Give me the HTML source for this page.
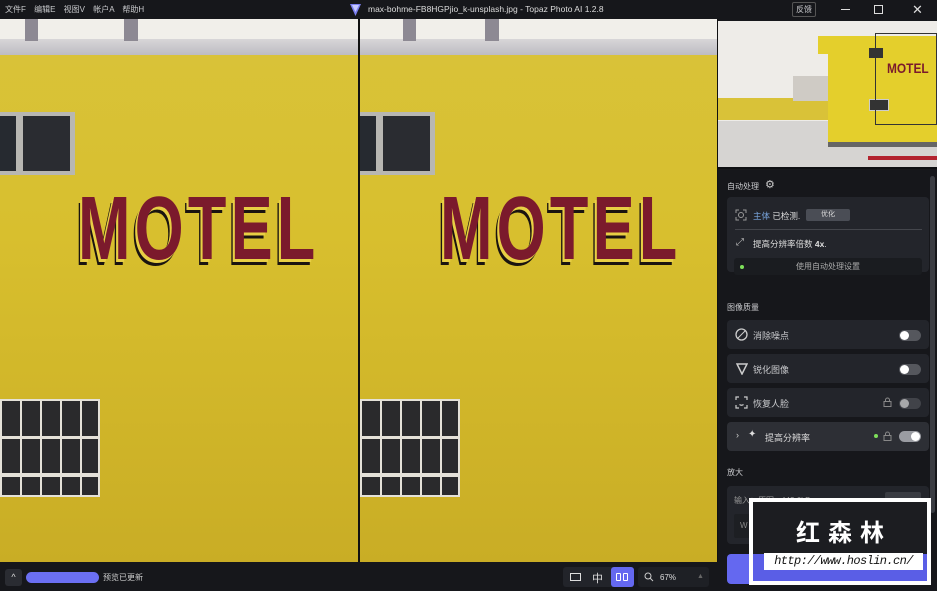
<!DOCTYPE html>
<html><head><meta charset="utf-8"><style>
*{margin:0;padding:0;box-sizing:border-box}
body{width:937px;height:591px;overflow:hidden;background:#16171b;font-family:"Liberation Sans","Noto Sans CJK SC",sans-serif;color:#c9cacd;position:relative;font-size:9px}
.a{position:absolute}
.top{left:0;top:0;width:937px;height:19px;background:#16171b}
.pan{top:19px;height:543px;overflow:hidden;background:linear-gradient(180deg,#d9c33a 0%,#d8bf2e 40%,#c9ad25 100%)}
.motel{font-family:"Liberation Sans Narrow","Liberation Sans",sans-serif;font-weight:bold;font-size:90px;letter-spacing:6px;color:#7b1a2c;transform:scaleX(0.70);transform-origin:left top;text-shadow:-3px 3px 0 #e8cf44,-5px 6px 0 #1a1410;line-height:1}
.card{background:#23252b;border-radius:4px;left:727px;width:202px}
.tog{width:22px;height:11px;border-radius:6px;background:#55575d}
.tog::after{content:"";position:absolute;width:9px;height:9px;border-radius:50%;background:#fff;top:1px;left:1px}
.tog.on{background:#9a9ca2}.tog.on::after{left:12px}
.gr{border:2px solid #e4e1d8;background:repeating-linear-gradient(90deg,#2a2a2c 0 18px,#e4e1d8 18px 20px)}
</style></head><body>
<div class="a top"></div>
<div class="a" style="left:5px;top:4px;font-size:8px;color:#c8c9cc;word-spacing:6px">文件F 编辑E 视图V 帐户A 帮助H</div>
<svg class="a" style="left:349px;top:2px" width="13" height="15"><path d="M1 2h11l-5.5 12z" fill="#7b7ff0"/><path d="M3 3h7l-3.5 7z" fill="#c5c8ff"/></svg>
<div class="a" style="left:368px;top:4px;font-size:8.5px;color:#ddd">max-bohme-FB8HGPjio_k-unsplash.jpg - Topaz Photo AI 1.2.8</div>
<div class="a" style="left:792px;top:2px;width:24px;height:15px;border:1px solid #555;border-radius:2px;font-size:8px;text-align:center;line-height:13px">反馈</div>
<div class="a" style="left:841px;top:9px;width:9px;height:1px;background:#ddd"></div>
<div class="a" style="left:874px;top:5px;width:9px;height:9px;border:1.3px solid #ddd"></div>
<div class="a" style="left:912px;top:2px;font-size:13px;color:#ddd">✕</div>

<div class="a pan" style="left:0;width:358px">
 <div class="a" style="left:0;top:0;width:358px;height:22px;background:#f1efea"></div>
 <div class="a" style="left:0;top:20px;width:358px;height:16px;background:linear-gradient(#d8d6d8,#bdbcc2)"></div>
 <div class="a" style="left:25px;top:0;width:13px;height:22px;background:#8d8993"></div>
 <div class="a" style="left:124px;top:0;width:14px;height:22px;background:#8d8993"></div>
 <div class="a" style="left:0;top:93px;width:75px;height:63px;background:#b8b7b2"></div>
 <div class="a" style="left:0;top:97px;width:16px;height:55px;background:#262a30"></div>
 <div class="a" style="left:23px;top:97px;width:47px;height:55px;background:#2a2c31"></div>
 <div class="a motel" style="left:78px;top:165px">MOTEL</div>
 <div class="a gr" style="left:0;top:380px;width:100px;height:98px"></div>
 <div class="a" style="left:0;top:417px;width:100px;height:3px;background:#e4e1d8"></div>
 <div class="a" style="left:0;top:454px;width:100px;height:4px;background:#e4e1d8"></div>
</div>
<div class="a" style="left:358px;top:19px;width:2px;height:543px;background:#111"></div>
<div class="a pan" style="left:360px;width:357px">
 <div class="a" style="left:0;top:0;width:357px;height:22px;background:#f1efea"></div>
 <div class="a" style="left:0;top:20px;width:357px;height:16px;background:linear-gradient(#d8d6d8,#bdbcc2)"></div>
 <div class="a" style="left:43px;top:0;width:13px;height:22px;background:#8d8993"></div>
 <div class="a" style="left:125px;top:0;width:14px;height:22px;background:#8d8993"></div>
 <div class="a" style="left:0;top:93px;width:75px;height:63px;background:#b8b7b2"></div>
 <div class="a" style="left:0;top:97px;width:16px;height:55px;background:#262a30"></div>
 <div class="a" style="left:23px;top:97px;width:47px;height:55px;background:#2a2c31"></div>
 <div class="a motel" style="left:80px;top:165px">MOTEL</div>
 <div class="a gr" style="left:0;top:380px;width:100px;height:98px"></div>
 <div class="a" style="left:0;top:417px;width:100px;height:3px;background:#e4e1d8"></div>
 <div class="a" style="left:0;top:454px;width:100px;height:4px;background:#e4e1d8"></div>
</div>
<div class="a" style="left:717px;top:19px;width:1px;height:543px;background:#111"></div>

<div class="a" style="left:718px;top:21px;width:219px;height:146px;overflow:hidden;background:#eeece8">
 <div class="a" style="left:0;top:100px;width:219px;height:46px;background:#d6d4d2"></div>
 <div class="a" style="left:0;top:77px;width:110px;height:22px;background:#d9c238"></div>
 <div class="a" style="left:75px;top:55px;width:35px;height:25px;background:#cfcbc5"></div>
 <div class="a" style="left:110px;top:15px;width:109px;height:106px;background:#e4cf2c"></div>
 <div class="a" style="left:100px;top:15px;width:12px;height:18px;background:#e4cf2c"></div>
 <div class="a" style="left:110px;top:121px;width:109px;height:5px;background:#666"></div>
 <div class="a" style="left:150px;top:135px;width:69px;height:4px;background:#b3232f"></div>
 <div class="a" style="left:169px;top:39px;font:bold 14px 'Liberation Sans';color:#7b1a2c;transform:scaleX(.85);transform-origin:left">MOTEL</div>
 <div class="a" style="left:151px;top:27px;width:14px;height:10px;background:#333"></div>
 <div class="a" style="left:151px;top:78px;width:20px;height:12px;background:#333;border:1px solid #ccc"></div>
 <div class="a" style="left:157px;top:12px;width:62px;height:92px;border:1px solid #333"></div>
</div>
<div class="a" style="left:718px;top:167px;width:219px;height:2px;background:#0e0f12"></div>
<div class="a" style="left:930px;top:176px;width:5px;height:337px;background:#3a3c42;border-radius:3px"></div>

<div class="a" style="left:727px;top:181px;font-size:8px">自动处理</div>
<div class="a" style="left:765px;top:178px;font-size:11px;color:#ccc">⚙</div>
<div class="a card" style="top:197px;height:75px"></div>
<svg class="a" style="left:735px;top:209px" width="12" height="12" fill="none" stroke="#999" stroke-width="1"><path d="M1 4V1h3M8 1h3v3M11 8v3H8M4 11H1V8"/><circle cx="6" cy="6" r="2.5"/></svg>
<div class="a" style="left:753px;top:210px;font-size:8.5px"><span style="color:#7aa7e0">主体</span> <span style="color:#ddd">已检测.</span></div>
<div class="a" style="left:806px;top:209px;width:44px;height:12px;background:#4a4d55;border-radius:2px;font-size:7px;text-align:center;line-height:12px;color:#ddd">优化</div>
<div class="a" style="left:735px;top:229px;width:187px;height:1px;background:#44464c"></div>
<div class="a" style="left:736px;top:237px;font-size:10px;color:#bbb">⤢</div>
<div class="a" style="left:753px;top:238px;font-size:8.5px;color:#ddd">提高分辨率倍数 <b>4x</b>.</div>
<div class="a" style="left:734px;top:258px;width:188px;height:17px;background:#1a1c20;border-radius:3px;font-size:8px;text-align:center;line-height:17px;color:#aaa">使用自动处理设置</div>
<div class="a" style="left:740px;top:265px;width:4px;height:4px;border-radius:50%;background:#7ee05a"></div>

<div class="a" style="left:727px;top:302px;font-size:8px">图像质量</div>
<div class="a card" style="top:320px;height:29px"></div>
<div class="a card" style="top:354px;height:29px"></div>
<div class="a card" style="top:388px;height:29px"></div>
<div class="a card" style="top:422px;height:29px;background:#2d2f35"></div>
<svg class="a" style="left:735px;top:328px" width="13" height="13"><circle cx="6.5" cy="6.5" r="5.5" fill="none" stroke="#ccc" stroke-width="1.3"/><path d="M3 10L10 3" stroke="#ccc"/></svg>
<div class="a" style="left:753px;top:329px;font-size:9px">消除噪点</div>
<div class="a tog" style="left:899px;top:330px"></div>
<svg class="a" style="left:736px;top:363px" width="12" height="12"><path d="M1 1h10L6 11z" fill="none" stroke="#ccc" stroke-width="1.5"/></svg>
<div class="a" style="left:753px;top:363px;font-size:9px">锐化图像</div>
<div class="a tog" style="left:899px;top:364px"></div>
<svg class="a" style="left:735px;top:396px" width="13" height="13" fill="none" stroke="#ccc" stroke-width="1.2"><path d="M1 4V1h3M9 1h3v3M12 9v3H9M4 12H1V9M4.5 8.5q2 1.5 4 0"/></svg>
<div class="a" style="left:753px;top:397px;font-size:9px">恢复人脸</div>
<svg class="a" style="left:883px;top:397px" width="9" height="10" fill="none" stroke="#888"><rect x="1" y="4.5" width="7" height="5"/><path d="M2.5 4.5V3a2 2 0 0 1 4 0v1.5"/></svg>
<div class="a tog" style="left:899px;top:398px;opacity:.6"></div>
<div class="a" style="left:736px;top:430px;font-size:9px;color:#ccc">›</div>
<div class="a" style="left:748px;top:429px;font-size:10px;color:#ddd">✦</div>
<div class="a" style="left:765px;top:431px;font-size:9px;color:#ddd">提高分辨率</div>
<div class="a" style="left:874px;top:434px;width:4px;height:4px;border-radius:50%;background:#7ee05a"></div>
<svg class="a" style="left:883px;top:431px" width="9" height="10" fill="none" stroke="#888"><rect x="1" y="4.5" width="7" height="5"/><path d="M2.5 4.5V3a2 2 0 0 1 4 0v1.5"/></svg>
<div class="a tog on" style="left:899px;top:431px"></div>

<div class="a" style="left:727px;top:467px;font-size:8px">放大</div>
<div class="a card" style="top:486px;height:58px"></div>
<div class="a" style="left:734px;top:495px;font-size:8px;color:#999">输入：原图 - 442.6kB</div>
<div class="a" style="left:885px;top:492px;width:36px;height:15px;background:#3a3c42;border-radius:2px"></div>
<div class="a" style="left:734px;top:514px;width:188px;height:24px;background:#1d1f23;border-radius:2px;font-size:8px;color:#888;line-height:24px;padding-left:6px">W <span style="margin-left:28px">640</span></div>
<div class="a" style="left:727px;top:554px;width:203px;height:30px;background:#6468f0;border-radius:4px"></div>

<div class="a" style="left:749px;top:498px;width:182px;height:87px;background:#fff"></div>
<div class="a" style="left:753px;top:502px;width:174px;height:79px;background:#1c1d21"></div>
<div class="a" style="left:753px;top:554px;width:174px;height:27px;background:#5a5ee6"></div>
<div class="a" style="left:796px;top:513px;font:bold 24px 'Noto Sans CJK SC',sans-serif;color:#fff;letter-spacing:8px">红森林</div>
<div class="a" style="left:764px;top:553px;width:159px;height:17px;background:#fff;font:italic 12px 'Liberation Mono',monospace;color:#111;line-height:17px;text-align:center;letter-spacing:-0.6px;overflow:hidden">http://www.hoslin.cn/</div>

<div class="a" style="left:5px;top:569px;width:17px;height:17px;background:#2a2c32;border-radius:3px;color:#ddd;font-size:9px;text-align:center;line-height:17px">^</div>
<div class="a" style="left:26px;top:572px;width:73px;height:11px;background:#6b6ff2;border-radius:6px"></div>
<div class="a" style="left:103px;top:572px;font-size:8px;color:#ccc">预览已更新</div>
<div class="a" style="left:563px;top:567px;width:71px;height:20px;background:#22242a;border-radius:3px"></div>
<div class="a" style="left:570px;top:573px;width:11px;height:8px;border:1.3px solid #ddd"></div>
<div class="a" style="left:592px;top:570px;font-size:11px;color:#ddd">中</div>
<div class="a" style="left:611px;top:567px;width:23px;height:20px;background:#6468f0;border-radius:3px"></div>
<div class="a" style="left:616px;top:573px;width:5px;height:8px;border:1px solid #fff;border-radius:1px"></div>
<div class="a" style="left:623px;top:573px;width:5px;height:8px;border:1px solid #fff;border-radius:1px"></div>
<div class="a" style="left:638px;top:567px;width:71px;height:20px;background:#1e2025;border-radius:3px"></div>
<svg class="a" style="left:644px;top:572px" width="10" height="10" fill="none" stroke="#ccc"><circle cx="4" cy="4" r="3"/><path d="M6 6l3 3"/></svg>
<div class="a" style="left:660px;top:573px;font-size:8px;color:#ddd">67%</div>
<div class="a" style="left:697px;top:573px;font-size:7px;color:#666">▲</div>
</body></html>
